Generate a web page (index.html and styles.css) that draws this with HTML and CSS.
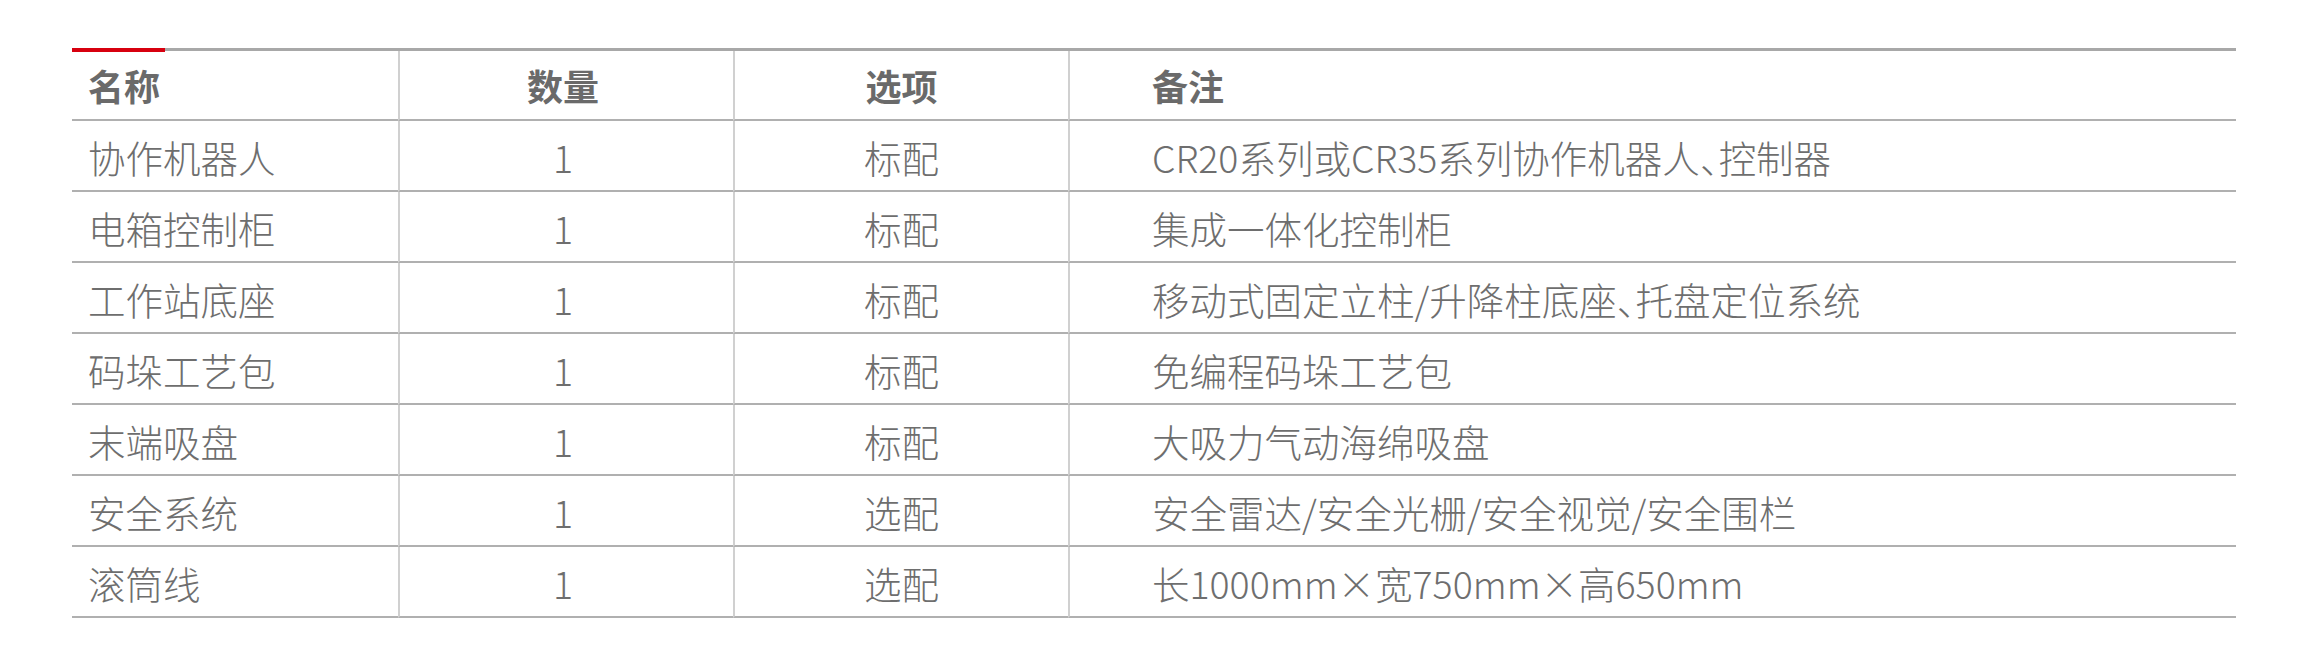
FILE: index.html
```html
<!DOCTYPE html>
<html lang="zh-CN">
<head>
<meta charset="utf-8">
<title>配置清单</title>
<link rel="stylesheet" href="styles.css">
</head>
<body>
<div class="wrap">
  <table class="spec">
    <colgroup>
      <col class="c-name">
      <col class="c-qty">
      <col class="c-opt">
      <col class="c-note">
    </colgroup>
    <thead>
      <tr>
        <th class="name">名称</th>
        <th class="qty">数量</th>
        <th class="center">选项</th>
        <th class="note">备注</th>
      </tr>
    </thead>
    <tbody>
      <tr><td class="name">协作机器人</td><td class="qty">1</td><td class="center">标配</td><td class="note">CR20系列或CR35系列协作机器人<span class="punct">、</span>控制器</td></tr>
      <tr><td class="name">电箱控制柜</td><td class="qty">1</td><td class="center">标配</td><td class="note">集成一体化控制柜</td></tr>
      <tr><td class="name">工作站底座</td><td class="qty">1</td><td class="center">标配</td><td class="note">移动式固定立柱/升降柱底座<span class="punct">、</span>托盘定位系统</td></tr>
      <tr><td class="name">码垛工艺包</td><td class="qty">1</td><td class="center">标配</td><td class="note">免编程码垛工艺包</td></tr>
      <tr><td class="name">末端吸盘</td><td class="qty">1</td><td class="center">标配</td><td class="note">大吸力气动海绵吸盘</td></tr>
      <tr><td class="name">安全系统</td><td class="qty">1</td><td class="center">选配</td><td class="note">安全雷达/安全光栅/安全视觉/安全围栏</td></tr>
      <tr><td class="name">滚筒线</td><td class="qty">1</td><td class="center">选配</td><td class="note">长1000mm×宽750mm×高650mm</td></tr>
    </tbody>
  </table>
</div>
</body>
</html>
```
FILE: styles.css
```css
html, body {
  margin: 0;
  padding: 0;
  background: #ffffff;
}

body {
  font-family: "Noto Sans CJK SC", "Noto Sans", sans-serif;
  color: #6e6e6e;
}

.wrap {
  padding: 48px 0 0 72px;
}

.spec {
  position: relative;
  width: 2164px;
  table-layout: fixed;
  border-collapse: separate;
  border-spacing: 0;
  border-top: 3px solid #a8a8a8;
}

.spec::before {
  content: "";
  position: absolute;
  left: 0;
  top: -3.5px;
  width: 93px;
  height: 4px;
  background: #d7000f;
}

.c-name { width: 326px; }
.c-qty { width: 335px; }
.c-opt { width: 335px; }
.c-note { width: 1168px; }

.spec th,
.spec td {
  padding: 0;
  border-bottom: 2px solid #b0b0b0;
  vertical-align: middle;
  white-space: nowrap;
  box-sizing: border-box;
}

.spec th + th,
.spec td + td {
  border-left: 2px solid #d0d0d0;
}

.spec th {
  height: 70px;
  font-size: 36px;
  font-weight: 700;
  color: #6a6a6a;
  text-align: left;
}

.spec td {
  height: 71px;
  padding-top: 2px;
  font-size: 37.5px;
  font-weight: 300;
  color: #6e6e6e;
}

.spec .name {
  padding-left: 16px;
}

.spec .qty {
  text-align: center;
  padding-right: 7px;
}

.spec .center {
  text-align: center;
}

.spec .note {
  padding-left: 82px;
}

.punct {
  font-feature-settings: "halt" 1;
}
```
